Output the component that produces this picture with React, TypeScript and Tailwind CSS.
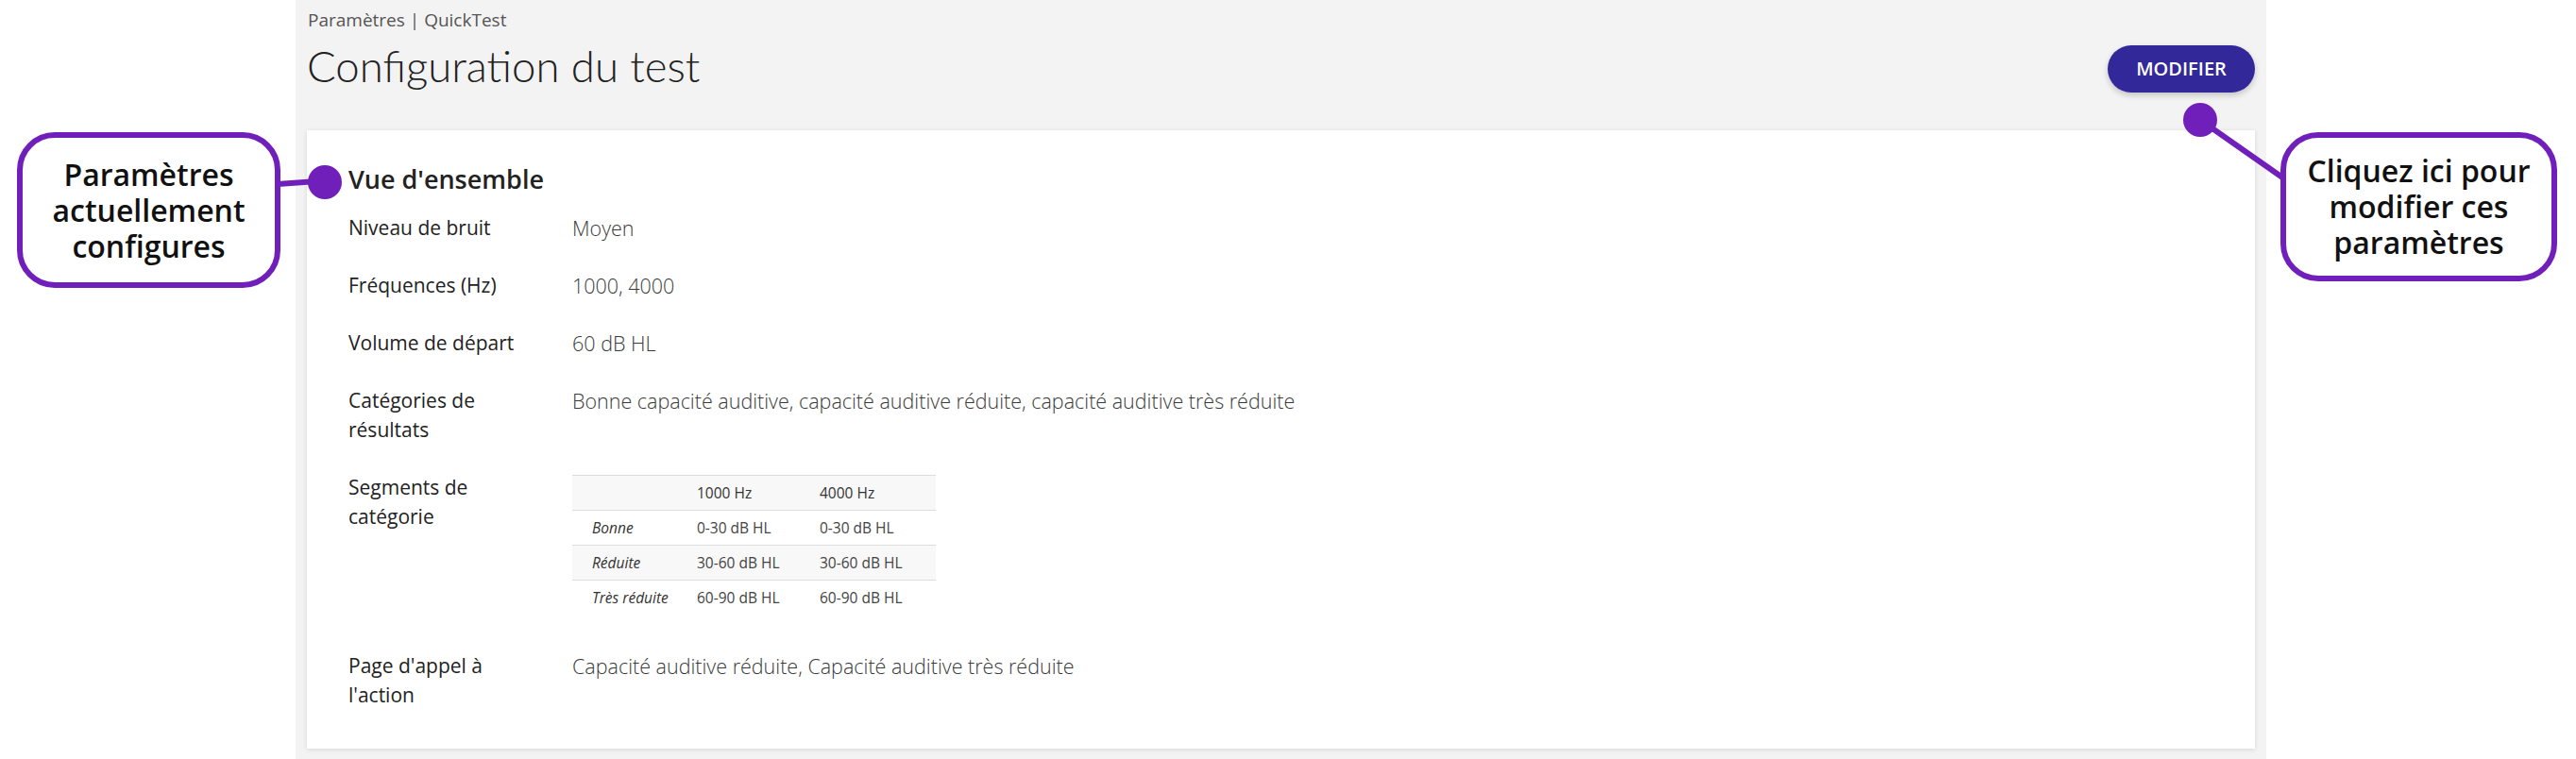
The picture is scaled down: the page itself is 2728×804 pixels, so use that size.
import React from "react";

const rows: { label: string; value?: string; table?: boolean }[] = [
  { label: "Niveau de bruit", value: "Moyen" },
  { label: "Fréquences (Hz)", value: "1000, 4000" },
  { label: "Volume de départ", value: "60 dB HL" },
  {
    label: "Catégories de résultats",
    value:
      "Bonne capacité auditive, capacité auditive réduite, capacité auditive très réduite",
  },
  { label: "Segments de catégorie", table: true },
  {
    label: "Page d'appel à l'action",
    value: "Capacité auditive réduite, Capacité auditive très réduite",
  },
];

const seg = [
  { name: "Bonne", a: "0-30 dB HL", b: "0-30 dB HL", shade: false },
  { name: "Réduite", a: "30-60 dB HL", b: "30-60 dB HL", shade: true },
  { name: "Très réduite", a: "60-90 dB HL", b: "60-90 dB HL", shade: false },
];

function SegTable() {
  return (
    <div className="pt-[2px] pb-[8px]">
      <table className="border-collapse text-[15.5px] leading-[20px] font-normal w-[385px]">
        <thead>
          <tr className="bg-[#f8f8f8] border-t border-[#dddddd]">
            <th className="w-[111px] h-[37px] pl-[21px] text-left font-normal"></th>
            <th className="w-[130px] h-[37px] pl-[21px] text-left font-normal text-[#333]">1000 Hz</th>
            <th className="h-[37px] pl-[21px] text-left font-normal text-[#333]">4000 Hz</th>
          </tr>
        </thead>
        <tbody>
          {seg.map((s) => (
            <tr
              key={s.name}
              className={(s.shade ? "bg-[#f8f8f8] " : "bg-white ") + "border-t border-[#dddddd]"}
            >
              <td className="h-[37px] pl-[21px] italic font-normal text-[#333]">{s.name}</td>
              <td className="h-[37px] pl-[21px] font-normal text-[#444]">{s.a}</td>
              <td className="h-[37px] pl-[21px] font-normal text-[#444]">{s.b}</td>
            </tr>
          ))}
        </tbody>
      </table>
    </div>
  );
}

export default function App() {
  return (
    <div
      className="relative w-[2728px] h-[804px] bg-white overflow-hidden"
      style={{ fontFamily: '"Open Sans", "Noto Sans", sans-serif' }}
    >
      <div className="ml-[313px] w-[2087px] h-full bg-[#f3f3f3] px-[12px] flex flex-col">
        <div className="pt-[9px] text-[19px] leading-[24px] text-[#555] pl-[1px]">
          Paramètres | QuickTest
        </div>
        <div className="mt-[15px] h-[50px] flex items-center justify-between">
          <h1
            className="text-[45.5px] leading-[50px] font-light text-[#222] relative top-[-3px]"
            style={{ fontFamily: 'Lato, "Open Sans", sans-serif' }}
          >
            Configuration du test
          </h1>
          <button className="w-[156px] h-[50px] rounded-full bg-[#33289a] text-white text-[20px] font-semibold shadow-[0_3px_6px_rgba(0,0,0,0.2)]">
            MODIFIER
          </button>
        </div>
        <div className="mt-[40px] bg-white shadow-[0_1px_5px_rgba(0,0,0,0.12)] pl-[44px] pr-[44px] pt-[34px] pb-[41px]">
          <h2 className="text-[27px] leading-[36px] font-semibold text-[#222]">Vue d'ensemble</h2>
          <div className="mt-[18px] flex flex-col gap-[30px]">
            {rows.map((r) => (
              <div key={r.label} className="flex">
                <div className="w-[237px] shrink-0 pr-[40px] text-[21px] leading-[31px] text-[#222]">
                  {r.label}
                </div>
                <div className="text-[21.5px] leading-[31px] font-light text-[#3a3a3a]">
                  {r.table ? <SegTable /> : r.value}
                </div>
              </div>
            ))}
          </div>
        </div>
      </div>

      {/* annotation layer */}
      <svg
        className="absolute inset-0 pointer-events-none"
        width={2728}
        height={804}
        viewBox="0 0 2728 804"
      >
        <line x1={294} y1={195} x2={336} y2={192} stroke="#701fba" strokeWidth={6} />
        <circle cx={344} cy={193} r={18} fill="#701fba" />
        <line x1={2330} y1={127} x2={2420} y2={190} stroke="#701fba" strokeWidth={6} />
        <circle cx={2330} cy={127} r={18} fill="#701fba" />
      </svg>
      <div className="absolute left-[18px] top-[140px] w-[279px] h-[165px] border-[6px] border-[#701fba] rounded-[40px] bg-white flex items-center justify-center text-center text-[32px] leading-[38px] font-semibold text-[#111]">
        Paramètres
        <br />
        actuellement
        <br />
        configures
      </div>
      <div className="absolute left-[2415px] top-[140px] w-[293px] h-[158px] border-[6px] border-[#701fba] rounded-[40px] bg-white flex items-center justify-center text-center text-[32px] leading-[38px] font-semibold text-[#111]">
        Cliquez ici pour
        <br />
        modifier ces
        <br />
        paramètres
      </div>
    </div>
  );
}
